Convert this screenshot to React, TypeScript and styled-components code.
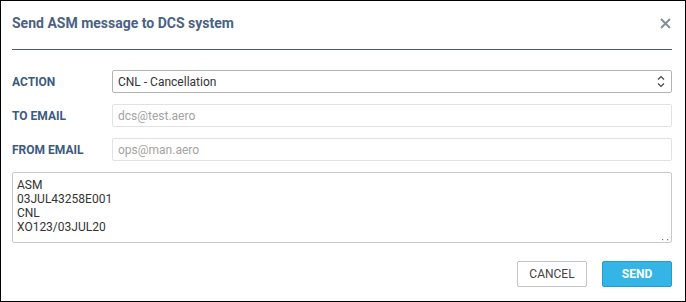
import React from 'react'
import styled, { createGlobalStyle } from 'styled-components'

const GlobalStyle = createGlobalStyle`
  html, body {
    margin: 0;
    padding: 0;
    background: #fff;
  }
  body {
    font-family: Roboto, "Liberation Sans", Arial, sans-serif;
  }
`

const Dialog = styled.div`
  box-sizing: border-box;
  width: 686px;
  height: 302px;
  border: 1px solid #000;
  background: #fff;
  padding: 0 13px 0 11px;
  display: flex;
  flex-direction: column;
`

const Header = styled.div`
  display: flex;
  align-items: flex-start;
  justify-content: space-between;
  padding: 14px 0 18px;
  border-bottom: 1px solid #4d5b6c;
`

const Title = styled.h2`
  margin: 0;
  font-size: 14px;
  line-height: 16px;
  font-weight: 700;
  color: #4a6283;
`

const CloseButton = styled.button`
  border: 0;
  background: none;
  padding: 0;
  margin: 3px 1px 0 0;
  width: 11px;
  height: 11px;
  display: flex;
  cursor: pointer;
`

const Form = styled.form`
  display: flex;
  flex-direction: column;
  gap: 11px;
  margin-top: 20px;
`

const Row = styled.div`
  display: grid;
  grid-template-columns: 100px 1fr;
  align-items: center;
`

const Label = styled.label`
  font-size: 12px;
  font-weight: 700;
  color: #3d5a80;
  text-transform: uppercase;
`

const SelectWrap = styled.div`
  position: relative;
  display: flex;
`

const Select = styled.select`
  appearance: none;
  box-sizing: border-box;
  width: 100%;
  height: 23px;
  border: 1px solid #b4b4b4;
  border-radius: 2px;
  background: #fff;
  padding: 0 20px 0 5px;
  font: 12px Roboto, "Liberation Sans", sans-serif;
  color: #333;
  outline: none;
`

const Chevrons = styled.svg`
  position: absolute;
  right: 7px;
  top: 5px;
  pointer-events: none;
`

const Input = styled.input`
  box-sizing: border-box;
  width: 100%;
  height: 23px;
  border: 1px solid #e2e2e2;
  border-radius: 2px;
  padding: 0 5px;
  font: 12px Roboto, "Liberation Sans", sans-serif;
  color: #333;
  outline: none;

  &::placeholder {
    color: #a3a3a3;
  }
`

const AreaWrap = styled.div`
  position: relative;
  display: flex;
`

const MessageArea = styled.textarea`
  box-sizing: border-box;
  width: 100%;
  height: 71px;
  border: 1px solid #c9c9c9;
  border-radius: 2px;
  padding: 5px 4px;
  font: 12px/14px Roboto, "Liberation Sans", sans-serif;
  color: #333;
  resize: none;
  outline: none;
`

const ResizeDots = styled.svg`
  position: absolute;
  right: 3px;
  bottom: 2px;
  pointer-events: none;
`

const Footer = styled.div`
  display: flex;
  justify-content: flex-end;
  gap: 15px;
  margin-top: 18px;
`

const Button = styled.button<{ $primary?: boolean }>`
  box-sizing: border-box;
  width: 70px;
  height: 26px;
  border-radius: 2px;
  font-family: Roboto, "Liberation Sans", sans-serif;
  font-size: 12px;
  font-weight: ${p => (p.$primary ? 700 : 400)};
  text-transform: uppercase;
  cursor: pointer;
  border: 1px solid ${p => (p.$primary ? '#1c9fd2' : '#c4c4c4')};
  background: ${p => (p.$primary ? '#35b5e6' : '#fff')};
  color: ${p => (p.$primary ? '#fff' : '#444')};
`

const message = 'ASM\n03JUL43258E001\nCNL\nXO123/03JUL20'

export default function App() {
  return (
    <>
      <GlobalStyle />
      <Dialog>
        <Header>
          <Title>Send ASM message to DCS system</Title>
          <CloseButton type="button" aria-label="Close">
            <svg width="11" height="11" viewBox="0 0 11 11">
              <path d="M1 1 L10 10 M10 1 L1 10" stroke="#858f9c" strokeWidth="2" />
            </svg>
          </CloseButton>
        </Header>
        <Form>
          <Row>
            <Label>Action</Label>
            <SelectWrap>
              <Select defaultValue="CNL">
                <option value="CNL">CNL - Cancellation</option>
                <option value="NEW">NEW - New flight</option>
              </Select>
              <Chevrons width="8" height="13" viewBox="0 0 8 13">
                <path d="M1 4.5 L4 1.5 L7 4.5 M1 8.5 L4 11.5 L7 8.5" stroke="#444" strokeWidth="1.2" fill="none" />
              </Chevrons>
            </SelectWrap>
          </Row>
          <Row>
            <Label>To email</Label>
            <Input placeholder="dcs@test.aero" />
          </Row>
          <Row>
            <Label>From email</Label>
            <Input placeholder="ops@man.aero" />
          </Row>
          <AreaWrap>
            <MessageArea defaultValue={message} />
            <ResizeDots width="7" height="2" viewBox="0 0 7 2">
              <rect x="0" y="0" width="1.2" height="1.2" fill="#777" />
              <rect x="5" y="0" width="1.2" height="1.2" fill="#777" />
            </ResizeDots>
          </AreaWrap>
        </Form>
        <Footer>
          <Button type="button">Cancel</Button>
          <Button type="button" $primary>Send</Button>
        </Footer>
      </Dialog>
    </>
  )
}
